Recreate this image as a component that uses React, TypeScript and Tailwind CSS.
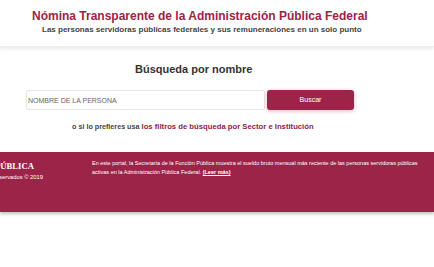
export default function App() {
  return (
    <div className="min-h-[267px] bg-white" style={{ fontFamily: '"Liberation Sans", Arial, sans-serif' }}>
      {/* Header */}
      <header className="h-[47px] bg-white pt-[8px] shadow-[0_2px_3px_rgba(0,0,0,0.08)] border-b border-[#eeeeee]">
        <h1 className="ml-[32px] text-[12px] leading-[16px] font-bold text-[#9d2449] whitespace-nowrap">
          Nómina Transparente de la Administración Pública Federal
        </h1>
        <p className="ml-[42px] mt-[1px] text-[8px] leading-[10px] font-bold text-[#444] whitespace-nowrap">
          Las personas servidoras públicas federales y sus remuneraciones en un solo punto
        </p>
      </header>

      {/* Search */}
      <section className="flex flex-col pt-[14px] pb-[20px]">
        <h2 className="ml-[135px] text-[11px] leading-[16px] font-bold text-[#333] whitespace-nowrap">Búsqueda por nombre</h2>
        <div className="flex items-center gap-[2px] mt-[13px] ml-[26px]">
          <input
            type="text"
            placeholder="NOMBRE DE LA PERSONA"
            className="w-[239px] h-[20px] border border-[#e6e6e6] rounded-[2px] px-[1px] text-[7px] placeholder-[#666] outline-none"
          />
          <button className="w-[87px] h-[20px] rounded-[3px] bg-[#9d2449] text-white text-[7px] shadow-[0_1px_4px_rgba(157,36,73,0.35)]">
            Buscar
          </button>
        </div>
        <p className="ml-[72px] mt-[12px] text-[7.2px] leading-[10px] font-bold text-[#444] whitespace-nowrap">
          o si lo prefieres usa{" "}
          <a className="text-[7.7px] text-[#8a1f47]">los filtros de búsqueda por Sector e Institución</a>
        </p>
      </section>

      {/* Footer */}
      <footer className="h-[60px] bg-[#9d2449] flex shadow-[0_2px_3px_rgba(0,0,0,0.25)] pt-[7px]">
        <div className="w-[92px] shrink-0 overflow-hidden">
          <div className="w-[43px] flex flex-col items-end">
            <span
              className="mr-[9px] mt-[2px] text-[8.7px] leading-[11px] font-bold text-white whitespace-nowrap"
              style={{ fontFamily: '"Liberation Serif", serif' }}
            >
              SECRETARÍA DE LA FUNCIÓN PÚBLICA
            </span>
            <span className="mt-[1px] text-[5.8px] leading-[9px] text-white whitespace-nowrap">
              Derechos Reservados © 2019
            </span>
          </div>
        </div>
        <p className="min-w-0 flex-1 text-[5.5px] leading-[9px] text-white whitespace-nowrap">
          En este portal, la Secretaría de la Función Pública muestra el sueldo bruto mensual más reciente de las personas servidoras públicas
          <br />
          activas en la Administración Pública Federal. <a className="font-bold underline">(Leer más)</a>
        </p>
      </footer>
    </div>
  );
}
